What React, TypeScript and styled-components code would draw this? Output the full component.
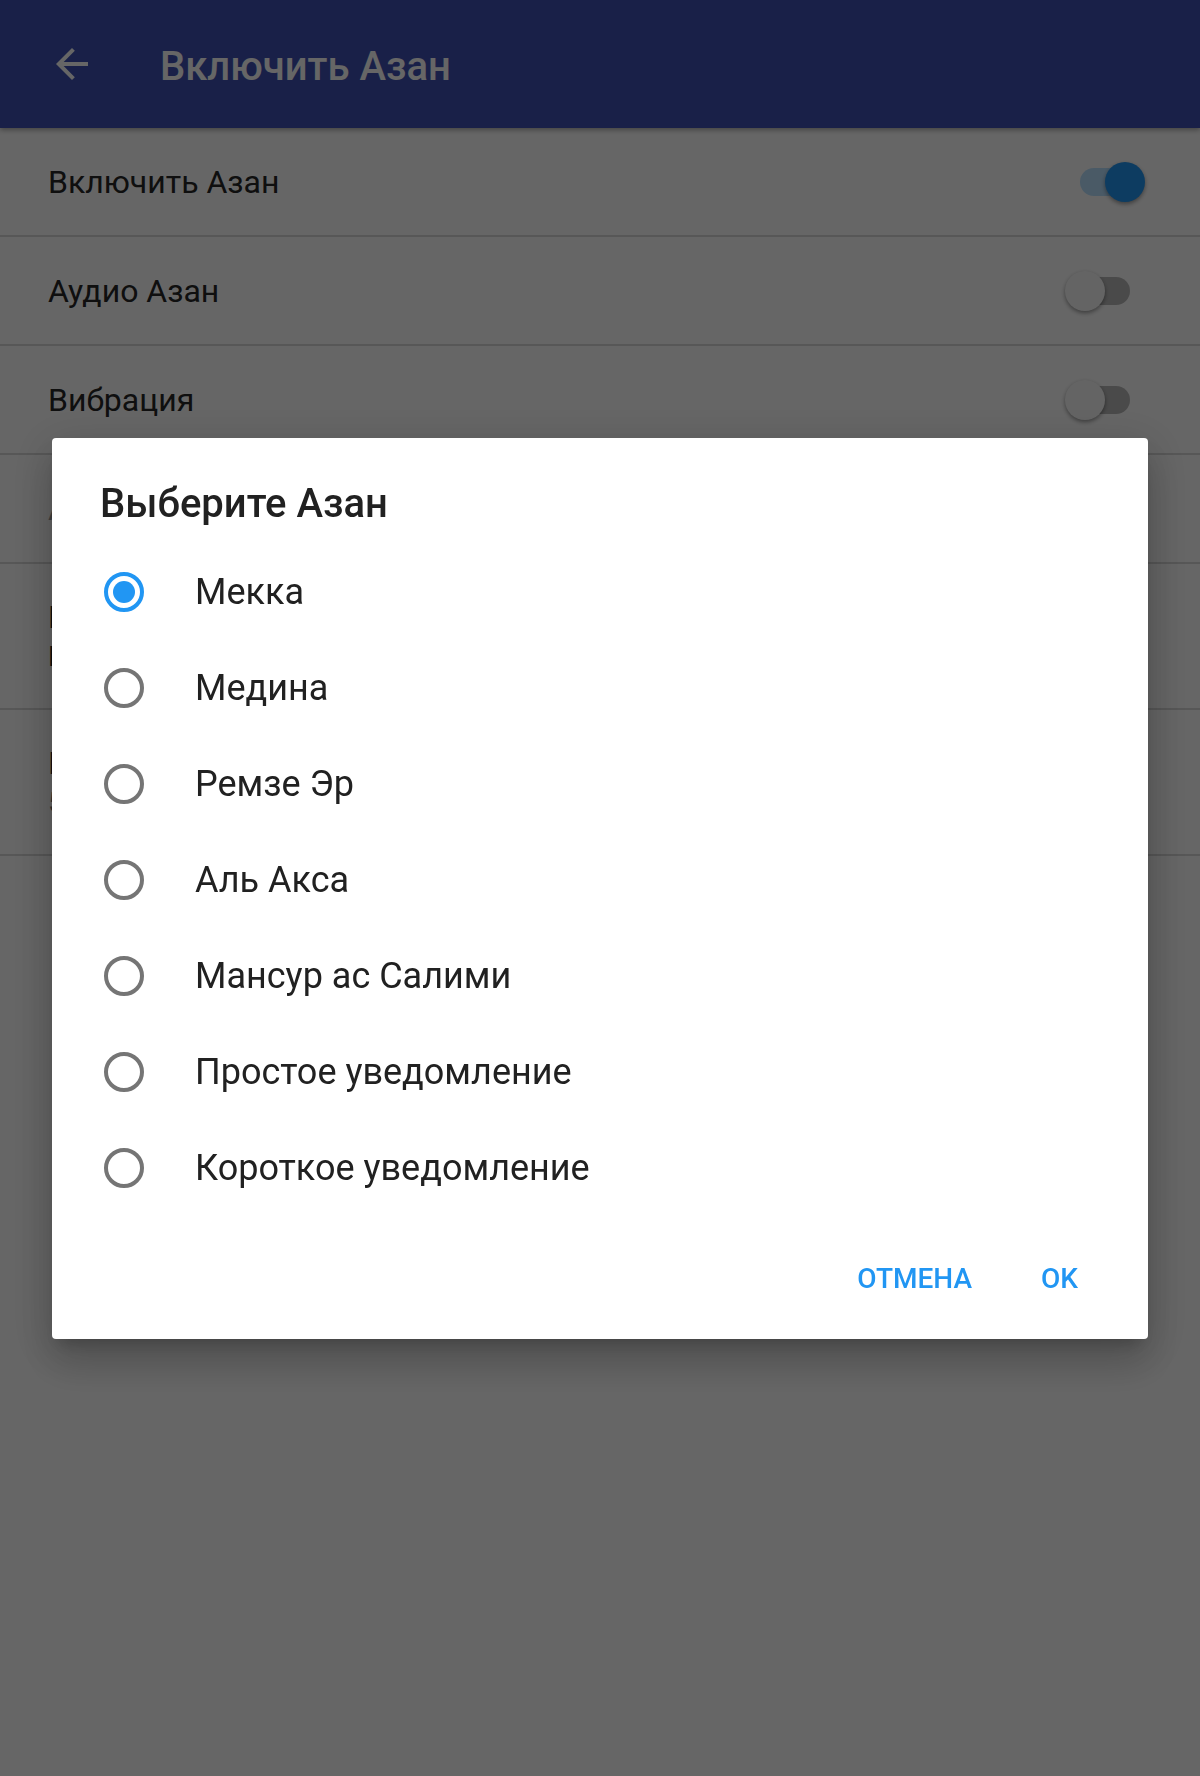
import React from "react";
import styled, { createGlobalStyle } from "styled-components";

const GlobalStyle = createGlobalStyle`
  html, body {
    margin: 0;
    padding: 0;
    background: #ffffff;
  }
  body {
    font-family: Roboto, "Noto Sans", "Liberation Sans", sans-serif;
    -webkit-font-smoothing: antialiased;
  }
  * { box-sizing: border-box; }
`;

const Screen = styled.div`
  width: 1200px;
  height: 1776px;
  background: #ffffff;
  overflow: hidden;
  display: flex;
  flex-direction: column;
`;

const AppBar = styled.header`
  position: relative;
  z-index: 1;
  height: 128px;
  flex-shrink: 0;
  background: #3f51b5;
  display: flex;
  align-items: center;
  padding-left: 48px;
  gap: 64px;
  box-shadow: 0 2px 5px rgba(0, 0, 0, 0.35);
`;

const BackButton = styled.span`
  width: 48px;
  height: 48px;
  display: flex;
  color: #ffffff;
`;

const AppTitle = styled.h1`
  margin: 0;
  padding-top: 5px;
  font-size: 40px;
  line-height: 48px;
  font-weight: 500;
  color: #ffffff;
`;

const PrefList = styled.div`
  display: flex;
  flex-direction: column;
`;

const PrefRow = styled.div<{ $tall?: boolean }>`
  display: flex;
  align-items: center;
  justify-content: space-between;
  height: ${(p) => (p.$tall ? 146 : 109)}px;
  padding: 0 55px 0 48px;
  border-bottom: 2px solid #d9d9d9;
`;

const PrefText = styled.div`
  display: flex;
  flex-direction: column;
`;

const PrefTitle = styled.div<{ $muted?: boolean }>`
  font-size: 32px;
  line-height: 40px;
  color: ${(p) => (p.$muted ? "#9e9e9e" : "#262626")};
`;

const PrefSummary = styled.div<{ $muted?: boolean }>`
  margin-top: 2px;
  font-size: 28px;
  line-height: 36px;
  color: ${(p) => (p.$muted ? "#757575" : "#262626")};
`;

const SwitchBox = styled.span`
  position: relative;
  width: 80px;
  height: 40px;
  flex-shrink: 0;
`;

const Track = styled.span<{ $on: boolean }>`
  position: absolute;
  left: 15px;
  top: 6px;
  width: 50px;
  height: 28px;
  border-radius: 14px;
  background: ${(p) => (p.$on ? "#b9e1ff" : "#b9b9b9")};
`;

const Thumb = styled.span<{ $on: boolean }>`
  position: absolute;
  top: 0;
  left: ${(p) => (p.$on ? 40 : 0)}px;
  width: 40px;
  height: 40px;
  border-radius: 50%;
  background: ${(p) => (p.$on ? "#2196f3" : "#fafafa")};
  box-shadow: 0 2px 4px rgba(0, 0, 0, 0.4);
`;

const Scrim = styled.div`
  position: fixed;
  inset: 0;
  z-index: 10;
  background: rgba(0, 0, 0, 0.6);
  display: flex;
  align-items: center;
  justify-content: center;
`;

const Dialog = styled.div`
  width: 1096px;
  background: #ffffff;
  border-radius: 4px;
  display: flex;
  flex-direction: column;
  padding-top: 42px;
  box-shadow: 0 24px 38px 3px rgba(0, 0, 0, 0.14),
    0 9px 46px 8px rgba(0, 0, 0, 0.12), 0 11px 15px -7px rgba(0, 0, 0, 0.2);
`;

const DialogTitle = styled.h2`
  margin: 0 0 16px 0;
  padding-left: 48px;
  font-size: 40px;
  line-height: 48px;
  font-weight: 500;
  color: #212121;
`;

const OptionList = styled.div`
  display: flex;
  flex-direction: column;
`;

const Option = styled.div`
  display: flex;
  align-items: center;
  height: 96px;
  padding-left: 52px;
  gap: 51px;
  font-size: 36px;
  line-height: 42px;
  color: #212121;
`;

const Radio = styled.span<{ $checked: boolean }>`
  width: 40px;
  height: 40px;
  flex-shrink: 0;
  border-radius: 50%;
  border: 4px solid ${(p) => (p.$checked ? "#2196f3" : "#757575")};
  display: flex;
  align-items: center;
  justify-content: center;

  &::after {
    content: "";
    display: ${(p) => (p.$checked ? "block" : "none")};
    width: 22px;
    height: 22px;
    border-radius: 50%;
    background: #2196f3;
  }
`;

const ButtonBar = styled.div`
  display: flex;
  justify-content: flex-end;
  gap: 37px;
  padding: 27px 54px 24px 0;
`;

const TextButton = styled.button`
  height: 72px;
  padding: 0 16px;
  border: none;
  background: transparent;
  font-family: inherit;
  font-size: 28px;
  font-weight: 500;
  text-transform: uppercase;
  color: #2196f3;
  cursor: pointer;
`;

const ArrowBack = () => (
  <svg width="48" height="48" viewBox="0 0 24 24" fill="currentColor">
    <path d="M20 11H7.83l5.59-5.59L12 4l-8 8 8 8 1.41-1.41L7.83 13H20v-2z" />
  </svg>
);

const Switch = ({ on }: { on: boolean }) => (
  <SwitchBox>
    <Track $on={on} />
    <Thumb $on={on} />
  </SwitchBox>
);

const options = [
  "Мекка",
  "Медина",
  "Ремзе Эр",
  "Аль Акса",
  "Мансур ас Салими",
  "Простое уведомление",
  "Короткое уведомление",
];

export default function App() {
  return (
    <>
      <GlobalStyle />
      <Screen>
        <AppBar>
          <BackButton>
            <ArrowBack />
          </BackButton>
          <AppTitle>Включить Азан</AppTitle>
        </AppBar>
        <PrefList>
          <PrefRow>
            <PrefTitle>Включить Азан</PrefTitle>
            <Switch on={true} />
          </PrefRow>
          <PrefRow>
            <PrefTitle>Аудио Азан</PrefTitle>
            <Switch on={false} />
          </PrefRow>
          <PrefRow>
            <PrefTitle>Вибрация</PrefTitle>
            <Switch on={false} />
          </PrefRow>
          <PrefRow>
            <PrefTitle $muted>Азан</PrefTitle>
          </PrefRow>
          <PrefRow $tall>
            <PrefText>
              <PrefTitle>Напоминание</PrefTitle>
              <PrefSummary>Напомнить</PrefSummary>
            </PrefText>
          </PrefRow>
          <PrefRow $tall>
            <PrefText>
              <PrefTitle>Громкость</PrefTitle>
              <PrefSummary $muted>50%</PrefSummary>
            </PrefText>
          </PrefRow>
        </PrefList>
      </Screen>
      <Scrim>
        <Dialog>
          <DialogTitle>Выберите Азан</DialogTitle>
          <OptionList>
            {options.map((o, i) => (
              <Option key={o}>
                <Radio $checked={i === 0} />
                <span>{o}</span>
              </Option>
            ))}
          </OptionList>
          <ButtonBar>
            <TextButton>Отмена</TextButton>
            <TextButton>OK</TextButton>
          </ButtonBar>
        </Dialog>
      </Scrim>
    </>
  );
}
